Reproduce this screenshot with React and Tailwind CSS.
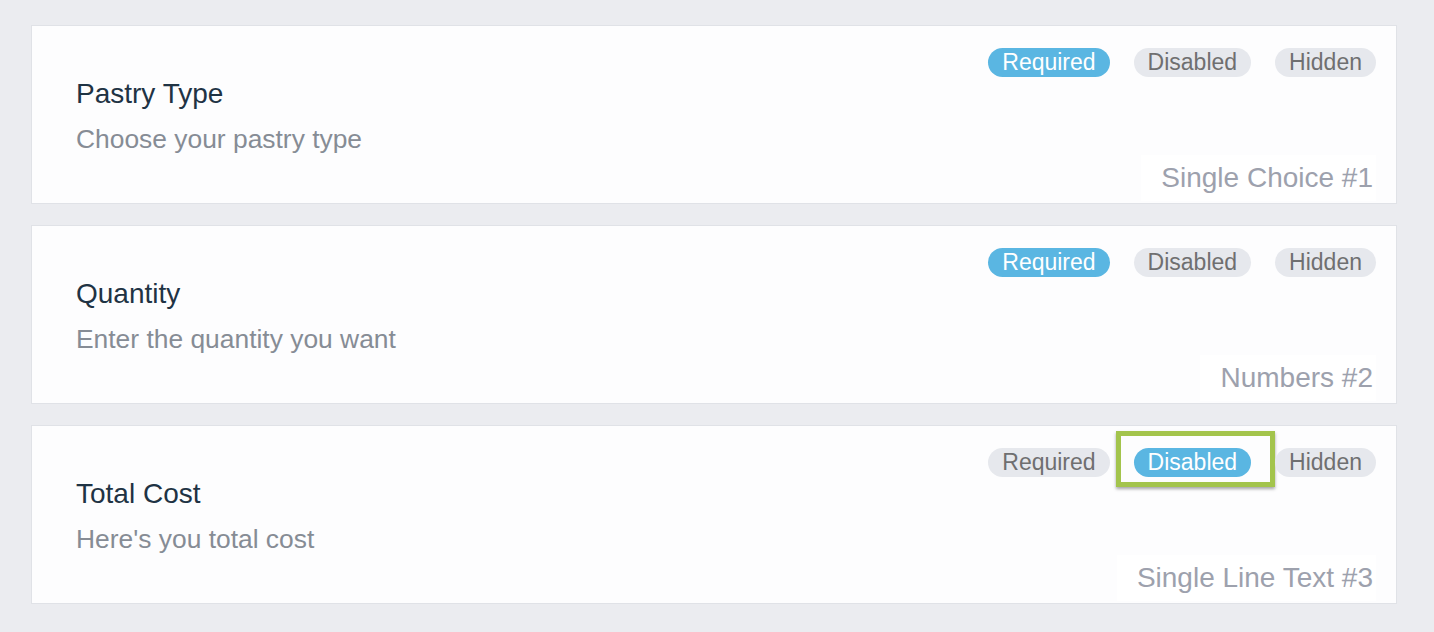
import React from "react";

const fields = [
  { title: "Pastry Type", desc: "Choose your pastry type", label: "Single Choice #1", active: "Required" },
  { title: "Quantity", desc: "Enter the quantity you want", label: "Numbers #2", active: "Required" },
  { title: "Total Cost", desc: "Here's you total cost", label: "Single Line Text #3", active: "Disabled", highlight: true },
];

function Pill({ text, active, highlight }) {
  return (
    <span className="relative inline-flex">
      <span
        className={
          active
            ? "h-[29px] px-[14px] rounded-full bg-[#5ab6e2] text-white text-[23px] leading-[29px]"
            : "h-[29px] px-[14px] rounded-full bg-[#e6e8ed] text-[#6f6f70] text-[23px] leading-[29px]"
        }
      >
        {text}
      </span>
      {highlight && (
        <span className="absolute left-[-18px] right-[-24px] top-[-17px] bottom-[-10px] border-[5px] border-[#a3c44c] shadow-[0_2px_3px_rgba(0,0,0,0.35)]" />
      )}
    </span>
  );
}

export default function App() {
  return (
    <div
      className="min-h-[632px] bg-[#ebecf0] pt-[25px] pl-[31px] pr-[37px] flex flex-col gap-[21px]"
      style={{ fontFamily: '"Liberation Sans", Arial, sans-serif' }}
    >
      {fields.map((f) => (
        <div key={f.title} className="border border-[#e0e2e7] bg-[#fdfdfe] flex flex-col pb-[2px]">
          <div className="flex justify-end gap-[24px] pt-[22px] pr-[20px]">
            {["Required", "Disabled", "Hidden"].map((p) => (
              <Pill key={p} text={p} active={p === f.active} highlight={f.highlight && p === f.active} />
            ))}
          </div>
          <div className="pl-[44px] mt-[1px] text-[28px] leading-[32px] text-[#1f3344]">{f.title}</div>
          <div className="pl-[44px] mt-[13px] text-[26.4px] leading-[32px] text-[#868c95]">{f.desc}</div>
          <div className="flex justify-end pr-[20px]">
            <div className="h-[46px] bg-white pl-[20px] pr-[3px] flex items-center text-[28px] text-[#9da1ad]">
              {f.label}
            </div>
          </div>
        </div>
      ))}
    </div>
  );
}
